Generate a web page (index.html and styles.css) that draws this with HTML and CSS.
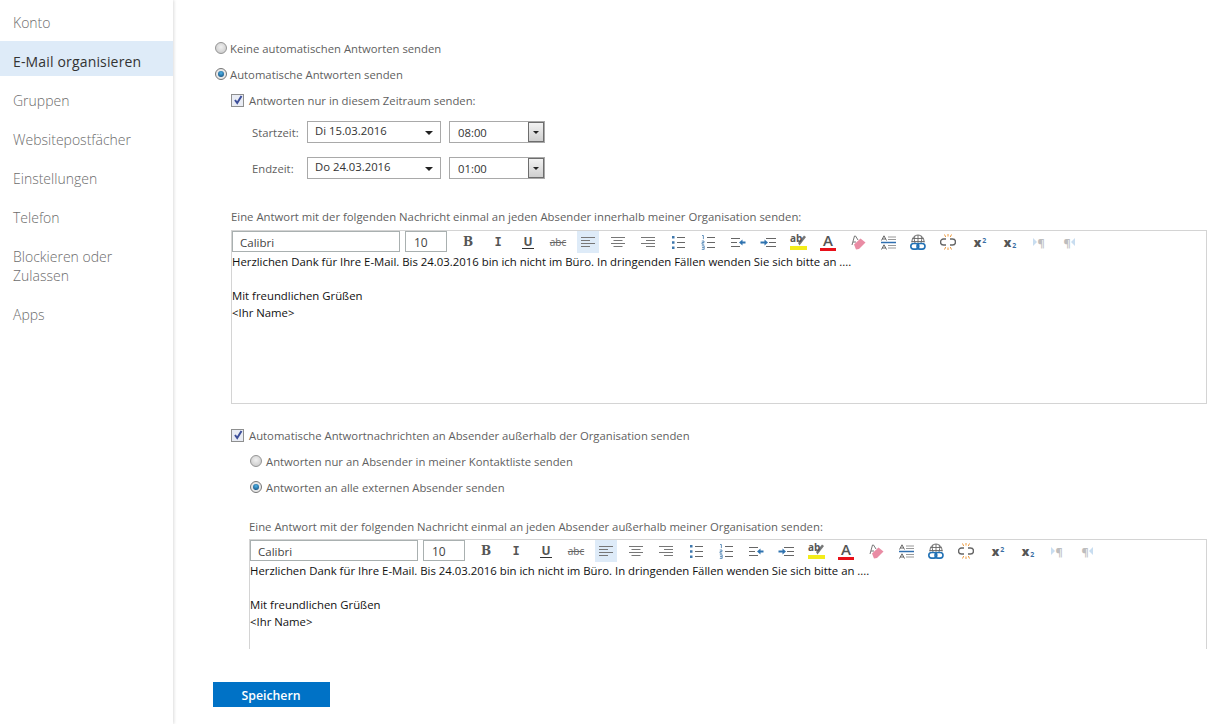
FILE: index.html
```html
<!DOCTYPE html>
<html lang="de">
<head>
<meta charset="utf-8">
<title>Automatische Antworten</title>
<link rel="stylesheet" href="styles.css">
</head>
<body>
<svg class="defs" width="0" height="0" aria-hidden="true">
  <symbol id="i-left" viewBox="0 0 16 12"><path d="M1 1.5h14M1 4.5h9M1 7.5h14M1 10.5h9" stroke="#777" fill="none"/></symbol>
  <symbol id="i-center" viewBox="0 0 16 12"><path d="M1 1.5h14M3.5 4.5h9M1 7.5h14M3.5 10.5h9" stroke="#777" fill="none"/></symbol>
  <symbol id="i-right" viewBox="0 0 16 12"><path d="M1 1.5h14M6 4.5h9M1 7.5h14M6 10.5h9" stroke="#777" fill="none"/></symbol>
  <symbol id="i-bullets" viewBox="0 0 14 15"><path d="M1 1h2.5v2.5H1zM1 6.2h2.5v2.5H1zM1 11.4h2.5v2.5H1z" fill="#3f78ad"/><path d="M6 2.5h8M6 7.5h8M6 12.5h8" stroke="#666" fill="none"/></symbol>
  <symbol id="i-numbers" viewBox="0 0 14 15"><path d="M1 .5h1.4v3.6M.8 6h2.2v1.6H1v1.6h2.2M.8 10.8h2.4v3.6H.8M1 12.6h2" stroke="#3f78ad" fill="none" stroke-width=".8"/><path d="M6 2.5h8M6 7.5h8M6 12.5h8" stroke="#666" fill="none"/></symbol>
  <symbol id="i-outdent" viewBox="0 0 16 11"><path d="M1 1.5h9M1 5.5h6M1 9.5h9" stroke="#666" fill="none"/><path d="M9 5.5l3.5-3v2h3v2h-3v2z" fill="#2f73b0"/></symbol>
  <symbol id="i-indent" viewBox="0 0 16 11"><path d="M6 1.5h10M9 5.5h7M6 9.5h10" stroke="#666" fill="none"/><path d="M8 5.5l-3.5-3v2h-4v2h4v2z" fill="#2f73b0"/></symbol>
  <symbol id="i-pen" viewBox="0 0 17 17"><path d="M8 10l1.5 2.5L16 4l-2-1.5z" fill="#777"/><rect x="0" y="13" width="17" height="4" fill="#f3ec1a"/></symbol>
  <symbol id="i-erase" viewBox="0 0 16 16"><path d="M2 11L4.5 2h1L8 6M3 8h3" stroke="#777" fill="none"/><path d="M4 10.5L10.5 4.5l5 4-6.5 6.5-3 .5z" fill="#e98ca4"/></symbol>
  <symbol id="i-spacing" viewBox="0 0 15 15"><path d="M7 2h8M7 4.5h8M7 10.5h8M7 13h8" stroke="#999" fill="none"/><path d="M0 7.5h15" stroke="#2f6fb0" stroke-width="1.5"/><path d="M.5 5.5L3 .8l2.5 4.7M1.4 4h3.2M.5 14.5L3 9.8l2.5 4.7M1.4 13h3.2" stroke="#555" fill="none" stroke-width=".9"/></symbol>
  <symbol id="i-link" viewBox="0 0 16 16"><path d="M2 8.5V7a6 6 0 0 1 12 0v1.5M8 1v8M2.5 4.5h11M1.5 7.5h13M5 1.8Q3.5 5 5 9M11 1.8Q12.5 5 11 9" stroke="#666" fill="none" stroke-width=".9"/><rect x=".8" y="9.5" width="8" height="5.6" rx="2.8" fill="none" stroke="#2171b5" stroke-width="1.6"/><rect x="7" y="9.5" width="8" height="5.6" rx="2.8" fill="none" stroke="#2171b5" stroke-width="1.6"/></symbol>
  <symbol id="i-unlink" viewBox="0 0 16 16"><path d="M6 5H3.5a3 3 0 0 0 0 6h2.5M10 5h2.5a3 3 0 0 1 0 6H10" stroke="#666" fill="none" stroke-width="1.4"/><path d="M4.5 .5l1.2 2.5M8 0v2.5M11.500 .5l-1.200 2.500M4.500 15.500l1.200-2.500M8 16v-2.500M11.500 15.500l-1.200-2.500" stroke="#ee9a3c" fill="none"/></symbol>
</svg>

<div class="app">
  <nav class="side">
    <a class="nav-item">Konto</a>
    <a class="nav-item is-active">E-Mail organisieren</a>
    <a class="nav-item">Gruppen</a>
    <a class="nav-item">Websitepostfächer</a>
    <a class="nav-item">Einstellungen</a>
    <a class="nav-item">Telefon</a>
    <a class="nav-item">Blockieren oder Zulassen</a>
    <a class="nav-item">Apps</a>
  </nav>

  <main class="main">
    <div class="scroll">
      <div class="row row-radio"><span class="radio"></span><span>Keine automatischen Antworten senden</span></div>
      <div class="row row-radio"><span class="radio is-on"></span><span>Automatische Antworten senden</span></div>
      <div class="row row-check">
        <span class="check"><svg viewBox="0 0 10 10" width="10" height="10"><path d="M2 5l2.2 3L8.5 1" stroke="#3d4f9a" stroke-width="2" fill="none"/></svg></span>
        <span>Antworten nur in diesem Zeitraum senden:</span>
      </div>
      <div class="time-row first">
        <span class="time-label">Startzeit:</span>
        <span class="date">Di 15.03.2016<i class="caret"></i></span>
        <span class="combo"><span class="combo-val">08:00</span><span class="combo-btn"><i class="caret"></i></span></span>
      </div>
      <div class="time-row">
        <span class="time-label">Endzeit:</span>
        <span class="date">Do 24.03.2016<i class="caret"></i></span>
        <span class="combo"><span class="combo-val">01:00</span><span class="combo-btn"><i class="caret"></i></span></span>
      </div>

      <div class="msg-label l1">Eine Antwort mit der folgenden Nachricht einmal an jeden Absender innerhalb meiner Organisation senden:</div>
      <section class="editor e1">
        <div class="toolbar">
          <span class="fld fld-font">Calibri</span>
          <span class="fld fld-size">10</span>
          <span class="tb first-tb"><b class="g-b">B</b></span>
          <span class="tb"><b class="g-i">I</b></span>
          <span class="tb"><b class="g-u">U</b></span>
          <span class="tb"><s class="g-s">abc</s></span>
          <span class="tb is-on"><svg width="16" height="12"><use href="#i-left"/></svg></span>
          <span class="tb"><svg width="16" height="12"><use href="#i-center"/></svg></span>
          <span class="tb"><svg width="16" height="12"><use href="#i-right"/></svg></span>
          <span class="tb"><svg width="14" height="15"><use href="#i-bullets"/></svg></span>
          <span class="tb"><svg width="14" height="15"><use href="#i-numbers"/></svg></span>
          <span class="tb"><svg width="16" height="11"><use href="#i-outdent"/></svg></span>
          <span class="tb"><svg width="16" height="11"><use href="#i-indent"/></svg></span>
          <span class="tb tb-pen"><svg width="17" height="17"><use href="#i-pen"/></svg><em class="g-ab">ab</em></span>
          <span class="tb tb-col"><em class="g-a">A</em><i class="col-bar"></i></span>
          <span class="tb"><svg width="16" height="16"><use href="#i-erase"/></svg></span>
          <span class="tb"><svg width="15" height="15"><use href="#i-spacing"/></svg></span>
          <span class="tb"><svg width="16" height="16"><use href="#i-link"/></svg></span>
          <span class="tb"><svg width="16" height="16"><use href="#i-unlink"/></svg></span>
          <span class="tb tb-sup"><b class="g-x">x</b><sup class="g-sup">2</sup></span>
          <span class="tb"><b class="g-x">x</b><sub class="g-sub">2</sub></span>
          <span class="tb tb-off tb-ltr"><i class="tri tri-r"></i><span class="g-p">¶</span></span>
          <span class="tb tb-off"><span class="g-p">¶</span><i class="tri tri-l"></i></span>
        </div>
        <div class="body-text">
          <p>Herzlichen Dank für Ihre E-Mail. Bis 24.03.2016 bin ich nicht im Büro. In dringenden Fällen wenden Sie sich bitte an ....</p>
          <p>&nbsp;</p>
          <p>Mit freundlichen Grüßen</p>
          <p>&lt;Ihr Name&gt;</p>
        </div>
      </section>

      <div class="row row-check ext">
        <span class="check"><svg viewBox="0 0 10 10" width="10" height="10"><path d="M2 5l2.2 3L8.5 1" stroke="#3d4f9a" stroke-width="2" fill="none"/></svg></span>
        <span>Automatische Antwortnachrichten an Absender außerhalb der Organisation senden</span>
      </div>
      <div class="row row-radio2"><span class="radio"></span><span>Antworten nur an Absender in meiner Kontaktliste senden</span></div>
      <div class="row row-radio2"><span class="radio is-on"></span><span>Antworten an alle externen Absender senden</span></div>

      <div class="msg-label l2">Eine Antwort mit der folgenden Nachricht einmal an jeden Absender außerhalb meiner Organisation senden:</div>
      <section class="editor e2">
        <div class="toolbar">
          <span class="fld fld-font">Calibri</span>
          <span class="fld fld-size">10</span>
          <span class="tb first-tb"><b class="g-b">B</b></span>
          <span class="tb"><b class="g-i">I</b></span>
          <span class="tb"><b class="g-u">U</b></span>
          <span class="tb"><s class="g-s">abc</s></span>
          <span class="tb is-on"><svg width="16" height="12"><use href="#i-left"/></svg></span>
          <span class="tb"><svg width="16" height="12"><use href="#i-center"/></svg></span>
          <span class="tb"><svg width="16" height="12"><use href="#i-right"/></svg></span>
          <span class="tb"><svg width="14" height="15"><use href="#i-bullets"/></svg></span>
          <span class="tb"><svg width="14" height="15"><use href="#i-numbers"/></svg></span>
          <span class="tb"><svg width="16" height="11"><use href="#i-outdent"/></svg></span>
          <span class="tb"><svg width="16" height="11"><use href="#i-indent"/></svg></span>
          <span class="tb tb-pen"><svg width="17" height="17"><use href="#i-pen"/></svg><em class="g-ab">ab</em></span>
          <span class="tb tb-col"><em class="g-a">A</em><i class="col-bar"></i></span>
          <span class="tb"><svg width="16" height="16"><use href="#i-erase"/></svg></span>
          <span class="tb"><svg width="15" height="15"><use href="#i-spacing"/></svg></span>
          <span class="tb"><svg width="16" height="16"><use href="#i-link"/></svg></span>
          <span class="tb"><svg width="16" height="16"><use href="#i-unlink"/></svg></span>
          <span class="tb tb-sup"><b class="g-x">x</b><sup class="g-sup">2</sup></span>
          <span class="tb"><b class="g-x">x</b><sub class="g-sub">2</sub></span>
          <span class="tb tb-off tb-ltr"><i class="tri tri-r"></i><span class="g-p">¶</span></span>
          <span class="tb tb-off"><span class="g-p">¶</span><i class="tri tri-l"></i></span>
        </div>
        <div class="body-text">
          <p>Herzlichen Dank für Ihre E-Mail. Bis 24.03.2016 bin ich nicht im Büro. In dringenden Fällen wenden Sie sich bitte an ....</p>
          <p>&nbsp;</p>
          <p>Mit freundlichen Grüßen</p>
          <p>&lt;Ihr Name&gt;</p>
        </div>
      </section>
    </div>
    <div class="actions"><button class="save" type="button">Speichern</button></div>
  </main>
</div>
</body>
</html>
```
FILE: styles.css
```css
* { box-sizing: border-box; }
html, body { margin: 0; height: 100%; background: #fff; overflow: hidden; }
body { font-family: "Open Sans", "Noto Sans", sans-serif; color: #5f5f5f; font-size: 11.3px; }
.defs { position: absolute; }

.app { display: flex; height: 724px; width: 1213px; }

/* Sidebar */
.side {
  width: 173px; flex: none; padding-top: 2px;
  display: flex; flex-direction: column; gap: 4px;
  box-shadow: 1px 0 3px rgba(0,0,0,.14);
}
.nav-item {
  display: block; padding: 11px 13px 5px; font-size: 14px; line-height: 19px;
  color: #6c6c6c; font-weight: 300;
}
.nav-item.is-active { background: #deebf8; color: #333; font-weight: 400; letter-spacing: .16px; }

/* Main */
.main { flex: 1; min-width: 0; padding: 35px 6px 0 0; display: flex; flex-direction: column; }
.scroll { height: 614px; overflow: hidden; }
.row { display: flex; align-items: center; height: 26px; }
.row-radio { padding-left: 42px; gap: 3px; }
.row-check { padding-left: 58px; gap: 5px; }
.row-check.ext { margin-top: 18px; }
.row-radio2 { padding-left: 77px; gap: 4px; }

.radio {
  width: 12px; height: 12px; border-radius: 50%; flex: none;
  border: 1px solid #949494;
  background: radial-gradient(circle at 50% 40%, #f0f0f0, #c4c4c4);
  position: relative;
}
.radio.is-on { background: #e8e8e8; border-color: #777; }
.radio.is-on::after {
  content: ""; position: absolute; left: 2px; top: 2px; width: 6px; height: 6px; border-radius: 50%;
  background: radial-gradient(circle at 50% 35%, #4fb3e8, #0a3f6e);
}
.check {
  width: 13px; height: 13px; flex: none; border: 1px solid #8e8f8f;
  background: #e9ecf4; display: flex; align-items: center; justify-content: center;
}

/* Time rows */
.time-row { display: flex; align-items: center; height: 22px; margin-top: 14px; padding-left: 79px; }
.time-row.first { margin-top: 8px; }
.time-label { width: 55px; flex: none; padding-top: 1px; }
.date {
  width: 134px; height: 22px; border: 1px solid #a9a9a9; padding: 0 7px 2px; color: #333;
  display: flex; align-items: center; justify-content: space-between; line-height: 18px;
}
.date .caret { margin-top: 4px; }
.caret { display: block; width: 0; height: 0; border: 4px solid transparent; border-top-color: #222; border-bottom: 0; }
.combo {
  width: 96px; height: 22px; margin-left: 8px; border: 1px solid #a9a9a9;
  display: flex; align-items: stretch; color: #333;
}
.combo-val { flex: 1; padding-left: 8px; line-height: 21px; }
.combo-btn {
  width: 16px; border: 1px solid #6d6d6d; background: linear-gradient(#f2f2f2, #cfcfcf);
  display: flex; align-items: center; justify-content: center;
}
.combo-btn .caret { border-width: 3.5px; border-bottom: 0; }

/* Editors */
.msg-label { height: 16px; line-height: 16px; font-size: 11.34px; }
.l1 { margin: 30px 0 5px 58px; }
.l2 { margin: 19px 0 4px 76px; }
.editor { border: 1px solid #d4d4d4; }
.e1 { margin-left: 58px; height: 174px; }
.e2 { margin-left: 76px; height: 140px; }
.toolbar { display: flex; align-items: flex-start; height: 22px; }
.fld {
  height: 21px; border: 1px solid #a9b0b0; color: #444; line-height: 22px;
  flex: none; padding-left: 7px; font-size: 11.5px;
}
.fld-font { width: 168px; }
.fld-size { width: 42px; margin-left: 5px; font-size: 12px; padding-left: 8px; }
.tb { width: 30px; height: 22px; flex: none; display: flex; align-items: center; justify-content: center; position: relative; }
.tb.first-tb { margin-left: 6px; }
.tb.is-on { background: #deebf8; width: 22px; margin: 0 4px; }
.tb.tb-sup { margin-left: 2px; }
.tb.tb-ltr { margin-left: -1px; }
.g-b, .g-u, .g-x { font-family: "DejaVu Serif", serif; font-size: 12px; color: #555; font-weight: 700; }
.g-i { font-family: "DejaVu Sans Mono", monospace; font-size: 12px; color: #555; font-weight: 700; font-style: normal; }
.g-u { font-family: "Open Sans", sans-serif; border-bottom: 1px solid #333; line-height: 13px; padding: 0 1px; }
.g-s { font-size: 10px; color: #666; }
.g-a { font-style: normal; font-size: 15px; font-weight: 600; color: #555; line-height: 16px; margin-top: -4px; }
.col-bar { position: absolute; left: 7px; top: 17px; width: 16px; height: 3px; background: #e8101a; }
.g-ab { position: absolute; left: 7px; top: 1px; font-style: normal; font-size: 10px; font-weight: 700; color: #555; line-height: 12px; }
.tb-pen svg { margin-top: -1px; }
.g-x { font-size: 12px; font-family: "Open Sans", sans-serif; font-weight: 800; }
.g-sup, .g-sub { font-size: 7px; font-weight: 700; color: #3b6ea5; line-height: 7px; margin-left: 1px; vertical-align: baseline; }
.g-sup { align-self: flex-start; margin-top: 6px; }
.g-sub { align-self: flex-end; margin-bottom: 4px; }
.tb-off { opacity: .55; }
.tb-off .g-p { font-size: 11px; color: #888; font-weight: 700; }
.tri { display: block; width: 0; height: 0; border: 4px solid transparent; }
.tri-r { border-left: 4px solid #9cc2e4; border-right: 0; }
.tri-l { border-right: 4px solid #9cc2e4; border-left: 0; }

.body-text { color: #111; font-size: 11.37px; line-height: 17px; }
.body-text p { margin: 0; white-space: nowrap; }

/* Save */
.actions { padding: 33px 0 0 40px; }
.save {
  display: block; width: 117px; height: 25px; border: 0; background: #0072c6; color: #fff;
  font-family: "Open Sans", sans-serif; font-size: 12.3px; font-weight: 600; padding: 1px 1px 0 0;
}
```
